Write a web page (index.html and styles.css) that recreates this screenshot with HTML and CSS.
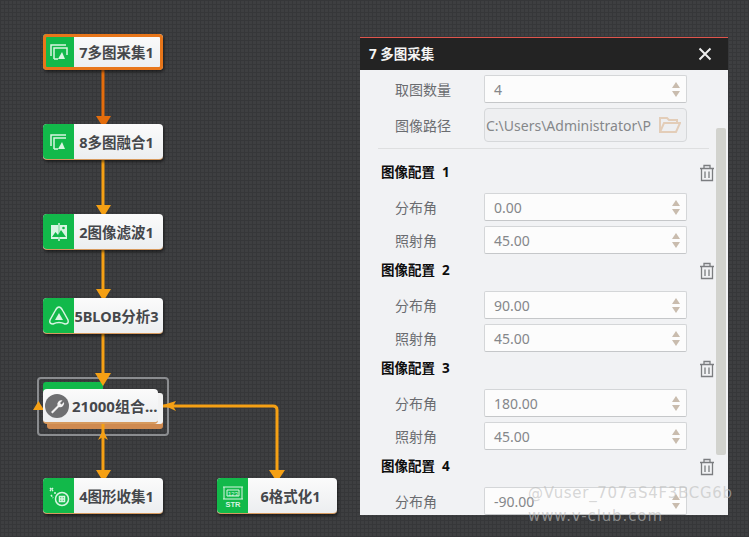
FILE: index.html
```html
<!DOCTYPE html>
<html lang="zh">
<head>
<meta charset="utf-8">
<title>多图采集</title>
<link rel="stylesheet" href="styles.css">
</head>
<body>
<main class="canvas">
  <svg class="edges" width="749" height="537" viewBox="0 0 749 537" aria-hidden="true">
    <path class="edge-active" d="M103 70V118"/>
    <path class="head-active" d="M96 116H111L103.500 128Z"/>
    <path class="edge" d="M103 159V208M103 250V292M103 334V376M103 424V472M163 406H273Q277 406 277 410V472"/>
    <path class="head" d="M96 205H111L103.500 217ZM96 289H111L103.500 301ZM95 373H111L103 386ZM96 470H111L103.500 482ZM269 470H285L277 482Z"/>
    <path class="head" d="M33 410L38.500 401L44 410ZM163 405L176 401L173 406L176 411ZM103 430L108 440L103 437L98 440Z"/>
  </svg>

  <div class="selection"></div>
  <div class="group-tab"></div>
  <div class="group-layer layer-back"></div>
  <div class="group-layer layer-mid"></div>

  <div class="node node-first">
    <div class="node-icon"><svg width="22" height="22" viewBox="0 0 22 22"><path class="ic" d="M3 15V4H18M6 18V7H19V14M6 18H10"/><path class="icf" d="M10 18L14 11L17 18Z"/></svg></div>
    <div class="node-label">7多图采集1</div>
  </div>
  <div class="node node-second">
    <div class="node-icon"><svg width="22" height="22" viewBox="0 0 22 22"><path class="ic" d="M3 15V4H18M6 18V7H18M6 18H10"/><path class="icf" d="M10 18L14 11L17 18Z"/></svg></div>
    <div class="node-label">8多图融合1</div>
  </div>
  <div class="node node-third">
    <div class="node-icon"><svg width="22" height="22" viewBox="0 0 22 22"><path class="icf" d="M3 4H10V18H3ZM12 4H19V18H12Z"/><path class="ic" d="M11 2V20"/><path class="icg" d="M4 16L7.500 11L10 14L13 9L18 16Z"/><circle class="icg" cx="15.500" cy="7" r="1.300"/></svg></div>
    <div class="node-label">2图像滤波1</div>
  </div>
  <div class="node node-fourth">
    <div class="node-icon"><svg width="24" height="24" viewBox="0 0 24 24"><path class="ic" d="M12 3C14 3 15 5 16 7L21 16C22 19 20 20 18 20C14 18 10 18 6 20C4 20 2 19 3 16L8 7C9 5 10 3 12 3Z"/><path class="icf" d="M12 9L16 16H8Z"/></svg></div>
    <div class="node-label">5BLOB分析3</div>
  </div>
  <div class="node node-group">
    <span class="tool-badge"><svg width="20" height="20" viewBox="0 0 20 20"><path class="wrench" d="M4 16L10.500 9.500A4 4 0 0 1 15.500 4.500L13 7L14.500 8.500L17 6A4 4 0 0 1 12 11L5.500 17.500Z"/></svg></span>
    <div class="group-label">21000组合...</div>
  </div>
  <div class="node node-collect">
    <div class="node-icon"><svg width="24" height="24" viewBox="0 0 24 24"><circle class="ic" cx="15" cy="15" r="6.500"/><path class="ic" d="M12 15H18M15 12V18M12.500 12.500H17.500V17.500H12.500Z"/><path class="dots" d="M3 4L6 7M6 4L3 7M8 8V10M4 11L6 14"/></svg></div>
    <div class="node-label">4图形收集1</div>
  </div>
  <div class="node node-format">
    <div class="node-icon"><svg width="26" height="26" viewBox="0 0 26 26"><path class="thin" d="M3 4H23M3 16H23M4 4V16M22 4V16M7 7H19V13H7Z"/><text class="str" x="13" y="23.500">STR</text><text class="num" x="13" y="12.500">123</text></svg></div>
    <div class="node-label">6格式化1</div>
  </div>

  <section class="panel">
    <header class="panel-head">
      <h1 class="panel-title">7 多图采集</h1>
      <svg class="close" width="14" height="14" viewBox="0 0 14 14"><path d="M1.500 1.500L12.500 12.500M12.500 1.500L1.500 12.500"/></svg>
    </header>
    <div class="panel-body">
      <div class="scrollbar"></div>
      <div class="row">
        <span class="label">取图数量</span>
        <div class="spin"><span class="val">4</span><span class="arrows"><i class="up"></i><i class="down"></i></span></div>
      </div>
      <div class="row path-row">
        <span class="label">图像路径</span>
        <div class="path"><span class="path-val">C:\Users\Administrator\P</span>
          <svg width="22" height="18" viewBox="0 0 22 18"><path class="folder" d="M1 16V2H8L10 4H18V7M1 16L5 7H21L17 16Z"/></svg>
        </div>
      </div>
      <div class="divider"></div>

      <div class="section section-first">
        <div class="section-head"><h2 class="section-title">图像配置&nbsp; 1</h2>
          <svg class="trash" width="16" height="18" viewBox="0 0 16 18"><path d="M1 4.500H15M5 4V1.500H11V4M2.500 4.500V16.500H13.500V4.500M6 7.500V14M10 7.500V14"/></svg></div>
        <div class="row"><span class="label">分布角</span><div class="spin"><span class="val">0.00</span><span class="arrows"><i class="up"></i><i class="down"></i></span></div></div>
        <div class="row"><span class="label">照射角</span><div class="spin"><span class="val">45.00</span><span class="arrows"><i class="up"></i><i class="down"></i></span></div></div>
      </div>
      <div class="section">
        <div class="section-head"><h2 class="section-title">图像配置&nbsp; 2</h2>
          <svg class="trash" width="16" height="18" viewBox="0 0 16 18"><path d="M1 4.500H15M5 4V1.500H11V4M2.500 4.500V16.500H13.500V4.500M6 7.500V14M10 7.500V14"/></svg></div>
        <div class="row"><span class="label">分布角</span><div class="spin"><span class="val">90.00</span><span class="arrows"><i class="up"></i><i class="down"></i></span></div></div>
        <div class="row"><span class="label">照射角</span><div class="spin"><span class="val">45.00</span><span class="arrows"><i class="up"></i><i class="down"></i></span></div></div>
      </div>
      <div class="section">
        <div class="section-head"><h2 class="section-title">图像配置&nbsp; 3</h2>
          <svg class="trash" width="16" height="18" viewBox="0 0 16 18"><path d="M1 4.500H15M5 4V1.500H11V4M2.500 4.500V16.500H13.500V4.500M6 7.500V14M10 7.500V14"/></svg></div>
        <div class="row"><span class="label">分布角</span><div class="spin"><span class="val">180.00</span><span class="arrows"><i class="up"></i><i class="down"></i></span></div></div>
        <div class="row"><span class="label">照射角</span><div class="spin"><span class="val">45.00</span><span class="arrows"><i class="up"></i><i class="down"></i></span></div></div>
      </div>
      <div class="section">
        <div class="section-head"><h2 class="section-title">图像配置&nbsp; 4</h2>
          <svg class="trash" width="16" height="18" viewBox="0 0 16 18"><path d="M1 4.500H15M5 4V1.500H11V4M2.500 4.500V16.500H13.500V4.500M6 7.500V14M10 7.500V14"/></svg></div>
        <div class="row"><span class="label">分布角</span><div class="spin"><span class="val">-90.00</span><span class="arrows"><i class="up"></i><i class="down"></i></span></div></div>
      </div>
    </div>
  </section>

  <div class="watermark"><span>@Vuser_707aS4F3BCG6b</span><span class="wm-site">www.v-club.com</span></div>
</main>
</body>
</html>
```
FILE: styles.css
```css
* { box-sizing: border-box; }
html, body { margin: 0; padding: 0; }
body { font-family: "Noto Sans", "Noto Sans CJK SC", sans-serif; }

.canvas {
  position: relative;
  width: 749px;
  height: 537px;
  overflow: hidden;
  background-color: #3e3f41;
  background-image:
    repeating-linear-gradient(90deg, #363739 0 1px, transparent 1px 4px),
    repeating-linear-gradient(0deg, #363739 0 1px, transparent 1px 4px);
}

.edges { position: absolute; left: 0; top: 0; z-index: 3; }
.edge, .edge-active { fill: none; stroke-width: 3; }
.edge { stroke: #f5a014; }
.edge-active { stroke: #e46d0c; }
.head { fill: #f5a014; }
.head-active { fill: #e46d0c; }

.node {
  position: absolute;
  left: 43px;
  width: 120px;
  height: 36px;
  display: flex;
  background: linear-gradient(#fbfbfb, #eceef0);
  border-radius: 4px;
  border-bottom: 1px solid #d79a5e;
  box-shadow: 1px 2px 3px rgba(0, 0, 0, .5);
  z-index: 4;
}
.node-first { top: 34px; outline: 3px solid #e8761a; outline-offset: -3px; }
.node-second { top: 124px; }
.node-third { top: 214px; }
.node-fourth { top: 298px; }
.node-collect { top: 478px; }
.node-format { top: 478px; left: 217px; }

.node-icon {
  width: 31px;
  flex: none;
  display: flex;
  align-items: center;
  justify-content: center;
  background: #12b94a;
  border-radius: 4px 0 0 4px;
}
.node-label {
  flex: 1;
  display: flex;
  align-items: center;
  justify-content: center;
  padding-right: 4px;
  font-size: 14.500px;
  font-weight: 700;
  color: #45474b;
  white-space: nowrap;
}

.ic { fill: none; stroke: #d8f5e2; stroke-width: 1.500; }
.icf { fill: #d8f5e2; }
.icg { fill: #12b94a; }
.thin { fill: none; stroke: #d8f5e2; stroke-width: 1; }
.dots { fill: none; stroke: #d8f5e2; stroke-width: 1.500; stroke-dasharray: 2 1; }
.str, .num { fill: #d8f5e2; text-anchor: middle; font-family: "Liberation Sans", sans-serif; }
.str { font-size: 7.500px; font-weight: 700; }
.num { font-size: 6px; }

.selection {
  position: absolute;
  left: 37px;
  top: 377px;
  width: 132px;
  height: 59px;
  border: 2px solid #8b8d90;
  border-radius: 4px;
  z-index: 1;
}
.group-tab {
  position: absolute;
  left: 43px;
  top: 382px;
  width: 60px;
  height: 10px;
  background: #12b94a;
  border-radius: 3px 0 0 0;
  z-index: 2;
}
.group-layer {
  position: absolute;
  border-radius: 3px;
  z-index: 2;
}
.layer-back { top: 398px; left: 47px; width: 116px; height: 31px; background: #cf8a50; }
.layer-mid { top: 393px; left: 47px; width: 116px; height: 31px; background: #f2f2f2; }

.node.node-group {
  top: 389px;
  width: 115px;
  height: 35px;
  border-bottom: 2px solid #d79a5e;
  align-items: center;
  box-shadow: none;
  padding-left: 2px;
}
.tool-badge {
  width: 24px;
  height: 24px;
  flex: none;
  border-radius: 50%;
  background: #6e6f71;
  display: flex;
  align-items: center;
  justify-content: center;
}
.wrench { fill: #f2f2f2; }
.group-label {
  font-size: 15px;
  font-weight: 700;
  color: #45474b;
  margin-left: 3px;
  white-space: nowrap;
}

.panel {
  position: absolute;
  left: 360px;
  top: 37px;
  width: 368px;
  height: 478px;
  display: flex;
  flex-direction: column;
  border-top: 1px solid #e0554d;
  background: #f1f2f4;
  overflow: hidden;
  z-index: 5;
}
.panel-head {
  height: 32px;
  flex: none;
  background: #232323;
  display: flex;
  align-items: center;
  justify-content: space-between;
  padding: 0 16px 0 9px;
}
.panel-title {
  margin: 0 0 2px;
  font-size: 13.500px;
  font-weight: 700;
  color: #f4f4f4;
}
.close path { fill: none; stroke: #eeeeee; stroke-width: 2; }

.panel-body { position: relative; flex: 1; padding: 5px 0 0 0; overflow: hidden; }
.scrollbar {
  position: absolute;
  right: 2px;
  top: 58px;
  width: 10px;
  height: 327px;
  background: #d2d3ce;
  border-radius: 2px;
}

.row {
  display: flex;
  align-items: center;
  height: 28px;
  margin-bottom: 5px;
  padding-left: 35px;
}
.label { width: 89px; flex: none; font-size: 14px; color: #6a6c70; }
.spin {
  width: 203px;
  height: 28px;
  display: flex;
  align-items: center;
  justify-content: space-between;
  padding: 0 6px 0 9px;
  background: #fcfcfc;
  border: 1px solid #d4d6d8;
  border-bottom: 1.500px solid #c5c7c9;
  border-radius: 2px;
}
.val { font-size: 14px; color: #85878a; }
.arrows { display: flex; flex-direction: column; gap: 3px; }
.up, .down { display: block; width: 0; height: 0; border-left: 4px solid transparent; border-right: 4px solid transparent; }
.up { border-bottom: 6px solid #c9bcae; }
.down { border-top: 6px solid #c9bcae; }

.row.path-row { height: 34px; margin-bottom: 0; }
.path {
  width: 203px;
  height: 34px;
  display: flex;
  align-items: center;
  justify-content: space-between;
  padding: 0 5px 0 1px;
  background: #eeeff1;
  border: 1px solid #d6d8da;
  border-radius: 4px;
}
.path-val { font-size: 14px; color: #85878a; white-space: nowrap; overflow: hidden; }
.folder { fill: none; stroke: #e3cdb8; stroke-width: 2; }

.divider { height: 1px; background: #dedfe0; margin: 6px 19px 0 18px; }

.section-head {
  position: relative;
  height: 30px;
  margin-bottom: 7px;
  padding-left: 21px;
  display: flex;
  align-items: center;
}
.section-first .section-head { margin-top: 7px; }
.section-title { margin: 0; font-size: 13.500px; font-weight: 700; color: #0d0d0d; }
.trash { position: absolute; left: 339px; top: 8px; }
.trash path { fill: none; stroke: #7b7d80; stroke-width: 1.300; }
.section .row:last-child { margin-bottom: 0; }

.watermark {
  position: absolute;
  left: 528px;
  top: 483px;
  display: flex;
  flex-direction: column;
  gap: 3px;
  font-family: "DejaVu Sans", sans-serif;
  font-size: 15px;
  line-height: 20px;
  letter-spacing: .700px;
  color: rgba(190, 190, 190, .62);
  white-space: nowrap;
  z-index: 6;
}
.wm-site { letter-spacing: .900px; }
```
